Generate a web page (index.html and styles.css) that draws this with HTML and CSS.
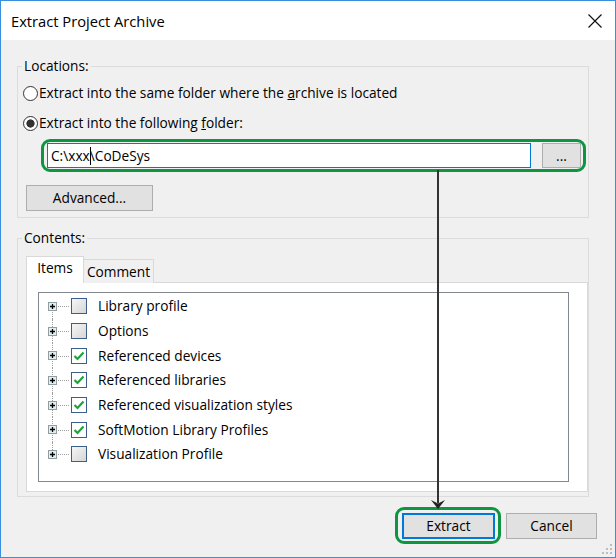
FILE: index.html
```html
<!DOCTYPE html>
<html lang="en">
<head>
<meta charset="utf-8">
<title>Extract Project Archive</title>
<link rel="stylesheet" href="styles.css">
</head>
<body>
<div class="window">
  <div class="titlebar">
    <span class="title">Extract Project Archive</span>
    <svg class="close" width="14" height="14" viewBox="0 0 14 14"><path d="M0.5 0.5L13.5 13.5M13.5 0.5L0.5 13.5"/></svg>
  </div>
  <div class="body">
    <fieldset class="group locations">
      <legend>Locations:</legend>
      <label class="radio-row first"><span class="radio"></span><span>Extract into the same folder where the <u>a</u>rchive is located</span></label>
      <label class="radio-row second"><span class="radio checked"></span><span>Extract into the following <u>f</u>older:</span></label>
      <div class="highlight path-row">
        <div class="textbox">C:\xxx<span class="caret"></span>\CoDeSys</div>
        <button class="btn browse">...</button>
      </div>
      <button class="btn advanced">Advanced...</button>
    </fieldset>
    <fieldset class="group contents">
      <legend>Contents:</legend>
      <div class="tabs">
        <div class="tab active">Items</div>
        <div class="tab">Comment</div>
      </div>
      <div class="tabpanel">
        <ul class="tree">
          <li class="first"><span class="exp"><svg class="plus" viewBox="0 0 9 9"><rect x="0.5" y="0.5" width="8" height="8"/><path d="M2 4.5h5M4.5 2v5"/></svg></span><span class="check"></span><span>Library profile</span></li>
          <li><span class="exp"><svg class="plus" viewBox="0 0 9 9"><rect x="0.5" y="0.5" width="8" height="8"/><path d="M2 4.5h5M4.5 2v5"/></svg></span><span class="check"></span><span>Options</span></li>
          <li><span class="exp"><svg class="plus" viewBox="0 0 9 9"><rect x="0.5" y="0.5" width="8" height="8"/><path d="M2 4.5h5M4.5 2v5"/></svg></span><span class="check on"><svg viewBox="0 0 14 14"><path d="M2.5 7L5.5 10L11.5 3.5"/></svg></span><span>Referenced devices</span></li>
          <li><span class="exp"><svg class="plus" viewBox="0 0 9 9"><rect x="0.5" y="0.5" width="8" height="8"/><path d="M2 4.5h5M4.5 2v5"/></svg></span><span class="check on"><svg viewBox="0 0 14 14"><path d="M2.5 7L5.5 10L11.5 3.5"/></svg></span><span>Referenced libraries</span></li>
          <li><span class="exp"><svg class="plus" viewBox="0 0 9 9"><rect x="0.5" y="0.5" width="8" height="8"/><path d="M2 4.5h5M4.5 2v5"/></svg></span><span class="check on"><svg viewBox="0 0 14 14"><path d="M2.5 7L5.5 10L11.5 3.5"/></svg></span><span>Referenced visualization styles</span></li>
          <li><span class="exp"><svg class="plus" viewBox="0 0 9 9"><rect x="0.5" y="0.5" width="8" height="8"/><path d="M2 4.5h5M4.5 2v5"/></svg></span><span class="check on"><svg viewBox="0 0 14 14"><path d="M2.5 7L5.5 10L11.5 3.5"/></svg></span><span>SoftMotion Library Profiles</span></li>
          <li class="last"><span class="exp"><svg class="plus" viewBox="0 0 9 9"><rect x="0.5" y="0.5" width="8" height="8"/><path d="M2 4.5h5M4.5 2v5"/></svg></span><span class="check"></span><span>Visualization Profile</span></li>
        </ul>
      </div>
    </fieldset>
    <div class="actions">
      <div class="highlight default-wrap"><button class="btn default">Extract</button></div>
      <button class="btn cancel">Cancel</button>
    </div>
  </div>
  <svg class="annotation" width="616" height="558" viewBox="0 0 616 558">
    <line x1="438" y1="170" x2="438" y2="503"/>
    <path d="M431 500L438 503.5L445 500L438 509Z"/>
  </svg>
  <svg class="grip" width="12" height="12" viewBox="0 0 12 12">
    <rect x="9" y="0" width="2" height="2"/>
    <rect x="9" y="4" width="2" height="2"/><rect x="5" y="4" width="2" height="2"/>
    <rect x="9" y="8" width="2" height="2"/><rect x="5" y="8" width="2" height="2"/><rect x="1" y="8" width="2" height="2"/>
  </svg>
</div>
</body>
</html>
```

FILE: styles.css
```css
html, body {
  margin: 0;
  padding: 0;
}

body {
  font-family: "Open Sans", "Noto Sans", sans-serif;
  font-size: 13.7px;
  line-height: 18px;
  color: #000;
  background: #fff;
}

.window {
  position: relative;
  width: 616px;
  height: 558px;
  box-sizing: border-box;
  border: 1px solid #3a8ede;
  background: #f0f0f0;
  display: flex;
  flex-direction: column;
}

.titlebar {
  height: 39px;
  flex: 0 0 39px;
  background: #fff;
  display: flex;
  align-items: center;
  justify-content: space-between;
  padding: 0 13px 0 10px;
}

.title {
  font-size: 14.7px;
}

.close {
  display: block;
  fill: none;
  stroke: #111;
  stroke-width: 1.2;
}

.body {
  flex: 1;
  padding: 17px 18px 0 16px;
}

.group {
  margin: 0 8px 0 0;
  padding: 0;
  border: 1px solid #dcdcdc;
  min-width: 0;
}

.group legend {
  margin-left: 4px;
  padding: 0 2px;
  line-height: 18px;
}

.radio-row {
  display: flex;
  align-items: center;
  height: 22px;
  margin-left: 5px;
}

.radio-row.first {
  margin-top: 7px;
}

.radio-row.second {
  margin-top: 8px;
}

.radio {
  width: 13px;
  height: 13px;
  border: 1px solid #333;
  border-radius: 50%;
  background: #fff;
  margin-right: 1px;
  flex: 0 0 auto;
}

.radio.checked {
  background: radial-gradient(circle, #333 0, #333 3.8px, #fff 4.4px);
}

.highlight {
  border: 3px solid #0f9541;
  border-radius: 9px;
}

.path-row {
  display: flex;
  align-items: center;
  gap: 11px;
  margin: 5px 2px 0 23px;
  padding: 1px 2px 1px 3px;
}

.textbox {
  flex: 1;
  height: 25px;
  box-sizing: border-box;
  border: 1px solid #0078d7;
  background: #fff;
  padding-left: 3px;
  line-height: 23px;
  white-space: nowrap;
}

.caret {
  display: inline-block;
  width: 1px;
  height: 18px;
  background: #000;
  vertical-align: -4px;
  margin-right: -1px;
}

.btn {
  font-family: inherit;
  font-size: inherit;
  color: #000;
  background: #e1e1e1;
  border: 1px solid #adadad;
  padding: 0;
  margin: 0;
  box-sizing: border-box;
  line-height: 18px;
}

.browse {
  width: 39px;
  height: 25px;
  flex: 0 0 39px;
}

.advanced {
  display: block;
  width: 127px;
  height: 26px;
  margin: 13px 0 6px 8px;
}

.contents {
  margin-top: 11px;
}

.tabs {
  display: flex;
  align-items: flex-end;
  margin: 9px 0 -1px 8px;
  position: relative;
  z-index: 1;
}

.tab {
  height: 24px;
  box-sizing: border-box;
  border: 1px solid #d9d9d9;
  border-bottom: none;
  background: #f0f0f0;
  line-height: 24px;
  text-align: center;
}

.tab.active {
  width: 58px;
  height: 27px;
  background: #fff;
  margin-right: -1px;
  position: relative;
  z-index: 1;
  line-height: 22px;
}

.tab + .tab {
  width: 71px;
}

.tabpanel {
  margin: 0 0 4px 8px;
  border: 1px solid #d9d9d9;
  background: #fff;
  padding: 9px 18px 9px 11px;
}

.tree {
  list-style: none;
  margin: 0;
  padding: 1px 0 0 0;
  height: 190px;
  box-sizing: border-box;
  border: 1px solid #828790;
  background: #fff;
}

.tree li {
  display: flex;
  align-items: center;
  height: 24.7px;
}

.exp {
  position: relative;
  display: flex;
  align-items: center;
  width: 32px;
  height: 100%;
  padding-left: 9px;
  box-sizing: border-box;
  flex: 0 0 32px;
}

.exp::before {
  content: "";
  position: absolute;
  left: 13px;
  top: 0;
  bottom: 0;
  border-left: 1px dotted #a0a0a0;
}

.tree li.first .exp::before {
  top: 50%;
}

.tree li.last .exp::before {
  bottom: 50%;
}

.exp::after {
  content: "";
  position: absolute;
  left: 19px;
  width: 11px;
  top: 50%;
  border-top: 1px dotted #a0a0a0;
}

.plus {
  position: relative;
  z-index: 1;
  width: 9px;
  height: 9px;
  display: block;
}

.plus rect {
  fill: #e4eeee;
  stroke: #8e9ea2;
  stroke-width: 1;
}

.plus path {
  stroke: #000;
  stroke-width: 1.3;
  fill: none;
}

.check {
  width: 16px;
  height: 16px;
  box-sizing: border-box;
  border: 1px solid #3d5d8a;
  background: linear-gradient(135deg, #f6f6f6, #d6d6d6);
  margin-right: 11px;
  flex: 0 0 16px;
  display: flex;
  align-items: center;
  justify-content: center;
}

.check.on {
  background: #fff;
}

.check svg {
  width: 14px;
  height: 14px;
  display: block;
}

.check svg path {
  fill: none;
  stroke: #1ea33a;
  stroke-width: 2.2;
}

.actions {
  display: flex;
  justify-content: flex-end;
  align-items: center;
  gap: 5px;
  margin-top: 10px;
}

.default-wrap {
  padding: 3px 3px 2px 4px;
}

.default {
  display: block;
  width: 93px;
  height: 26px;
  border: 1px solid #0078d7;
  box-shadow: inset 0 0 0 1px #0078d7;
}

.cancel {
  width: 91px;
  height: 26px;
}

.annotation {
  position: absolute;
  left: -1px;
  top: -1px;
  pointer-events: none;
}

.annotation line {
  stroke: #333;
  stroke-width: 2;
}

.annotation path {
  fill: #222;
}

.grip {
  position: absolute;
  right: 2px;
  bottom: 1px;
  fill: #bdbdbd;
}
```
